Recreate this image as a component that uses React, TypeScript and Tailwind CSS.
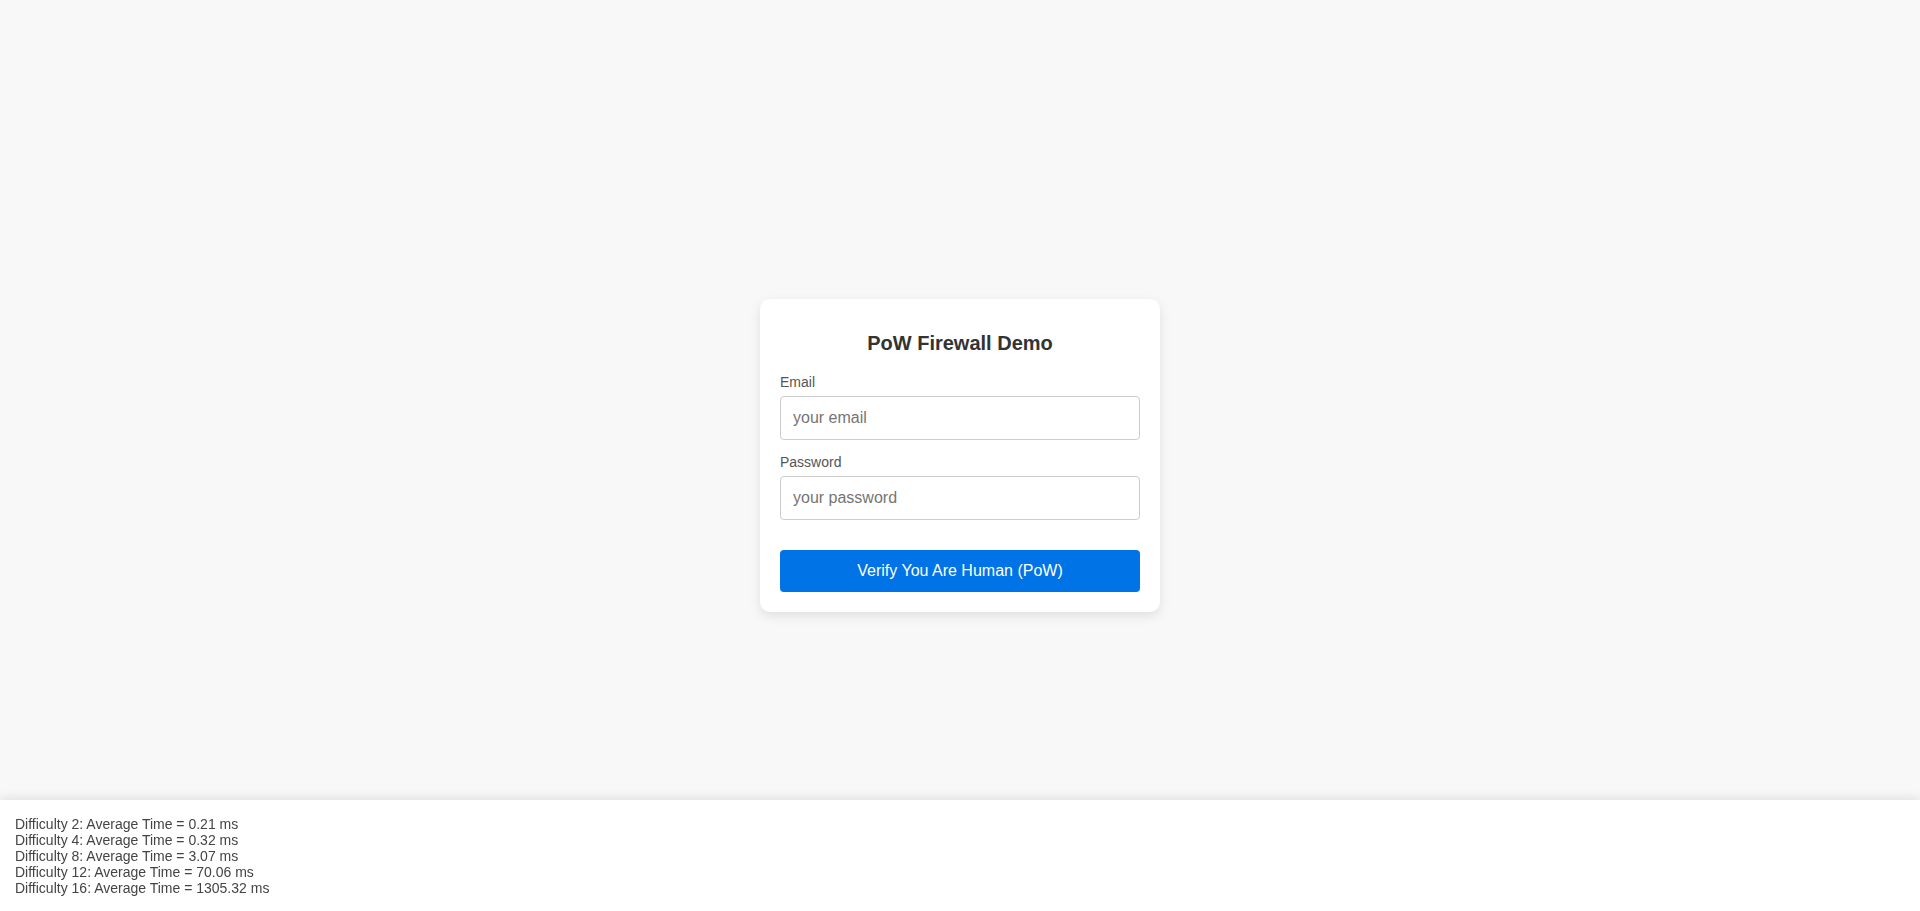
import { useState } from "react";

const results = [
  { difficulty: 2, avg: "0.21" },
  { difficulty: 4, avg: "0.32" },
  { difficulty: 8, avg: "3.07" },
  { difficulty: 12, avg: "70.06" },
  { difficulty: 16, avg: "1305.32" },
];

export default function App() {
  const [email, setEmail] = useState("");
  const [password, setPassword] = useState("");

  return (
    <div className="min-h-[911px] h-screen bg-[#f8f8f8] flex items-center justify-center font-['Liberation_Sans',Arial,sans-serif] text-[#333]">
      {/* Login card */}
      <form
        onSubmit={(e) => e.preventDefault()}
        className="w-[400px] bg-white rounded-[10px] p-5 shadow-[0_4px_12px_rgba(0,0,0,0.1)] flex flex-col"
      >
        <h2 className="mt-[13px] text-[20px] leading-[23px] font-bold text-center text-[#333]">
          PoW Firewall Demo
        </h2>

        <label className="mt-[19px] text-[14px] leading-[16px] text-[#555]">Email</label>
        <input
          type="email"
          value={email}
          onChange={(e) => setEmail(e.target.value)}
          placeholder="your email"
          className="mt-[6px] h-[44px] w-full px-3 border border-[#ccc] rounded-[4px] text-[16px] outline-none placeholder:text-[#757575]"
        />

        <label className="mt-[14px] text-[14px] leading-[16px] text-[#555]">Password</label>
        <input
          type="password"
          value={password}
          onChange={(e) => setPassword(e.target.value)}
          placeholder="your password"
          className="mt-[6px] h-[44px] w-full px-3 border border-[#ccc] rounded-[4px] text-[16px] outline-none placeholder:text-[#757575]"
        />

        <button
          type="submit"
          className="mt-[30px] h-[42px] w-full rounded-[4px] bg-[#0073e6] text-white text-[16px] cursor-pointer"
        >
          Verify You Are Human (PoW)
        </button>
      </form>

      {/* Benchmark results */}
      <div className="fixed left-0 right-0 bottom-0 h-[111px] bg-white shadow-[0_-2px_10px_rgba(0,0,0,0.1)] px-[15px] pt-[16px] text-[14px] leading-[16px] text-[#444]">
        {results.map((r) => (
          <div key={r.difficulty}>
            Difficulty {r.difficulty}: Average Time = {r.avg} ms
          </div>
        ))}
      </div>
    </div>
  );
}
